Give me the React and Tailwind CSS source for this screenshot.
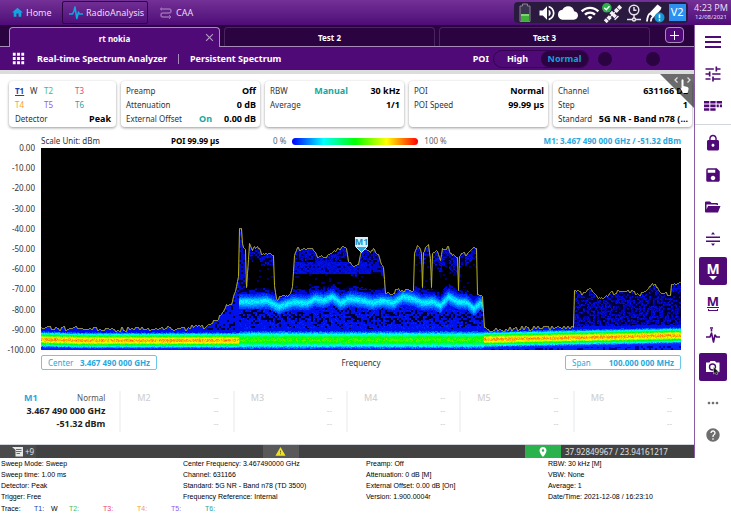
import { useMemo, useState } from "react";
import {
  MdApps,
  MdClose,
  MdCloud,
  MdHelp,
  MdHome,
  MdLock,
  MdMoreHoriz,
  MdPlace,
  MdSave,
  MdTune,
  MdVolumeUp,
  MdWarning,
  MdWifi,
} from "react-icons/md";

const PLOT_W = 640;
const PLOT_H = 202;

// [x, y] of the max hold trace, in plot units
const TRACE = [
  [0, 179], [20, 180], [60, 181], [100, 181], [145, 180], [152, 179], [157, 176], [163, 178],
  [169, 175], [175, 171], [180, 167], [185, 156], [190, 154], [194, 142], [197, 127],
  [198, 81], [200, 82], [201, 97], [204, 100], [205, 138], [207, 110], [208, 95], [211, 100],
  [216, 97], [220, 105], [224, 107], [229, 104], [232, 107], [233, 137], [235, 150],
  [242, 148], [249, 145], [251, 137], [253, 105], [256, 100], [264, 100], [272, 102],
  [276, 107], [282, 110], [287, 108], [292, 104], [299, 100], [302, 97], [305, 100],
  [307, 114], [312, 117], [317, 115], [319, 104], [325, 101], [332, 102], [337, 104],
  [340, 117], [342, 119], [344, 144], [352, 145], [357, 141], [372, 142], [373, 105],
  [376, 97], [379, 101], [380, 105], [381, 139], [382, 102], [387, 97], [389, 110],
  [390, 138], [391, 104], [396, 102], [399, 112], [401, 100], [407, 100], [411, 107],
  [416, 109], [417, 142], [418, 107], [426, 105], [432, 101], [435, 100], [436, 147],
  [441, 149], [443, 179], [447, 182], [455, 181], [492, 180], [532, 179], [533, 142],
  [539, 145], [549, 141], [554, 147], [561, 152], [569, 145], [581, 143], [591, 143],
  [601, 146], [604, 141], [609, 139], [614, 134], [616, 140], [619, 145], [629, 146],
  [630, 137], [634, 135], [640, 135],
];

// the bright band of the carrier's average level
const RIDGE = [
  [198, 153], [215, 153], [226, 152], [237, 158], [252, 153], [266, 154], [274, 150],
  [282, 152], [291, 148], [299, 154], [309, 150], [322, 152], [331, 154], [341, 152],
  [352, 154], [361, 148], [372, 150], [381, 154], [392, 153], [399, 157], [407, 148],
  [416, 153], [426, 154], [432, 160], [439, 154], [443, 158],
];

const STOPS = [
  [0, [0, 0, 0]],
  [0.1, [0, 0, 160]],
  [0.2, [0, 20, 255]],
  [0.4, [0, 255, 255]],
  [0.6, [0, 255, 0]],
  [0.8, [255, 255, 0]],
  [1, [255, 0, 0]],
];
const LEVELS = 28;

function interpolate(points, x) {
  for (let i = 1; i < points.length; i++) {
    if (x <= points[i][0]) {
      const [x0, y0] = points[i - 1];
      const [x1, y1] = points[i];
      return y0 + ((y1 - y0) * (x - x0)) / (x1 - x0);
    }
  }
  return points[points.length - 1][1];
}

function noise(x, y) {
  let h = (x * 374761393 + y * 668265263) | 0;
  h = Math.imul(h ^ (h >>> 13), 1274126177);
  return ((h ^ (h >>> 16)) >>> 0) / 4294967295;
}

function levelColor(v) {
  for (let i = 1; i < STOPS.length; i++) {
    if (v <= STOPS[i][0]) {
      const [v0, c0] = STOPS[i - 1];
      const [v1, c1] = STOPS[i];
      const t = (v - v0) / (v1 - v0);
      return `rgb(${c0.map((c, k) => Math.round(c + (c1[k] - c) * t)).join(",")})`;
    }
  }
  return "rgb(255,0,0)";
}

function density(x, y, top) {
  if (y < top) return 0;
  const n = noise(x, y);
  const grain = noise(x >> 1, (y >> 1) + 500);
  const inCarrier = x >= 198 && x < 443;

  // noise floor
  const center = x < 443 ? (x < 198 ? 191 + Math.min(1, x / 40) : 191.5) : 191 - ((x - 443) / 197) * 4;
  const d = y - center;
  const peak = inCarrier ? 0.64 : 0.87;
  const width = inCarrier ? 8.5 : 6.8;
  const floor = peak * Math.exp(-((d / width) ** 2)) + (n - 0.5) * 0.09;
  if (floor > 0.22) return floor;
  if (d > 0) return d > 10 && grain < 0.3 ? 0.12 : 0.2;
  if (d > -11) return 0.19;

  if (x < 198) return grain < 0.2 && x > 150 ? 0.05 : 0.17;
  if (x >= 532) return grain < 0.32 + (170 - y) * 0.006 ? 0.02 : 0.08 + n * 0.1;
  if (!inCarrier) return 0.15;

  const r = y - interpolate(RIDGE, x);
  if (r > -13) {
    const glow = 0.19 * Math.exp(-((r / (r < 0 ? 4.5 : 5.5)) ** 2));
    if (r < 0) {
      if (r > -8) return 0.19 + glow + (n - 0.5) * 0.04;
      return grain < (-r - 7) * 0.13 ? 0.05 : 0.15;
    }
    if (r < 8) return 0.2 + glow + (n - 0.5) * 0.04;
    const gap = 1 - Math.abs(y - 169) / 13;
    return grain < gap * 0.45 ? 0.03 : 0.17 + n * 0.03;
  }
  if (x < 207) return grain < 0.35 ? 0.03 : 0.13;
  const depth = y - top;
  if (x >= 253 && x < 330 && y > 113 && y < 126) return grain < 0.12 ? 0.08 : 0.14 + n * 0.04;
  if (x >= 330 && x < 343 && y > 113 && y < 126) return grain < 0.5 ? 0.02 : 0.13;
  const cap = x >= 391 && x < 417 ? 18 : 12;
  if (depth < cap) return grain < 0.12 + depth * 0.03 ? 0.04 : 0.1 + n * 0.08;
  return grain > 0.94 ? 0.08 : 0;
}

function buildSpectrum() {
  const tops = [];
  for (let x = 0; x < PLOT_W; x++) {
    const n = noise(x >> 1, 7);
    tops.push(Math.round(interpolate(TRACE, x) + (n - 0.5) * 4));
  }
  const layers = Array.from({ length: LEVELS + 1 }, () => "");
  for (let y = 70; y < PLOT_H; y++) {
    let start = 0;
    let last = 0;
    for (let x = 0; x <= PLOT_W; x++) {
      const v = x < PLOT_W ? Math.min(1, density(x, y, tops[x])) : -1;
      const level = v < 0 ? -1 : Math.round(v * LEVELS);
      if (level !== last) {
        if (last > 0) layers[last] += `M${start} ${y}h${x - start}v1h${start - x}z`;
        start = x;
        last = level;
      }
    }
  }
  const trace = "M" + tops.map((y, x) => `${x + 0.5} ${y + 0.5}`).join("L");
  return { layers, trace };
}

const SpectrumPlot = () => {
  const { layers, trace } = useMemo(buildSpectrum, []);
  return (
    <svg
      viewBox={`0 0 ${PLOT_W} ${PLOT_H}`}
      preserveAspectRatio="none"
      className="block h-[202px] w-full bg-black"
      role="img"
      aria-label="Persistent spectrum"
    >
      {layers.map((d, i) =>
        d ? <path key={i} d={d} fill={levelColor(i / LEVELS)} shapeRendering="crispEdges" /> : null
      )}
      <path d={trace} fill="none" stroke="#b9b31c" strokeWidth="1" />
      <rect x="314" y="89" width="13" height="9" fill="#d6f1fb" />
      <text x="320.5" y="97" textAnchor="middle" fontSize="9" fontWeight="700" fill="#1c8fc6">
        M1
      </text>
      <path d="M314.500 98.500h12l-6 6z" fill="#2aa9e0" stroke="#d6f1fb" strokeWidth="1" />
    </svg>
  );
};

const PulseIcon = ({ className }) => (
  <svg viewBox="0 0 14 14" className={className} fill="none" stroke="currentColor" strokeWidth="1.600">
    <path d="M0 8h3.500l1.500-3 1-4 1.800 11.500L9.500 6l1 2H14" strokeLinejoin="round" />
  </svg>
);

const RouteIcon = () => (
  <svg viewBox="0 0 12 12" className="size-3" fill="none" stroke="#9a6cb4" strokeWidth="1.500">
    <path d="M0 2h9a2 2 0 0 1 0 4H3a2 2 0 0 0 0 4h8" />
    <path d="M9 8l2 2-2 2M1.500.5v3" strokeWidth="1" />
  </svg>
);

const BatteryIcon = () => (
  <svg viewBox="0 0 14 20" className="h-5 w-[14px]">
    <path d="M4.500 1h5v2h2.500v15.500H2V3h2.500z" fill="#3c3350" stroke="#8b8496" strokeWidth="1" />
    <path d="M3 11h8v7H3z" fill="#3fae3a" />
    <path d="M3 11h8v2H3z" fill="#7ad46f" />
  </svg>
);

const SatelliteIcon = () => (
  <svg viewBox="0 0 20 20" className="size-5">
    <g transform="rotate(45 11 11)" fill="#f4f1f6">
      <path d="M8 9.500h7v3.500H8zM15.500 8.500h1.500v5.500h-1.500z" />
      <path d="M9 0h4v3.500H9zM9 4.200h4v3.500H9zM9 14.800h4v3.500H9zM9 19h4v3H9zM10.500 7h1v8h-1z" />
    </g>
    <circle cx="4.800" cy="4.800" r="4.800" fill="#2bb24c" />
    <path d="M2.300 4.800l2 2 3.200-3.500" fill="none" stroke="#fff" strokeWidth="1.400" />
  </svg>
);

const ClockIcon = () => (
  <svg viewBox="0 0 16 18" className="h-[18px] w-4" fill="none" stroke="#e6e1ea" strokeWidth="1.500">
    <circle cx="8" cy="6" r="4.800" />
    <path d="M8 3v3.300h2.500M8 11v3M1 15.500h5M10 15.500h5" />
    <circle cx="8" cy="15.500" r="1.500" />
  </svg>
);

const ProbeIcon = () => (
  <svg viewBox="0 0 20 20" className="size-5">
    <path d="M12.500 1.500l4 3-1 2.500L8.500 14.500 4 10.500z" fill="#fff" />
    <path d="M5 10.500C2.500 12 2.500 14 2 18.500M8 13.500c-1.500 1-2 2-2.200 5" stroke="#fff" strokeWidth="1.800" fill="none" />
    <circle cx="14.500" cy="14.500" r="5" fill="#1697d4" />
    <path d="M14.500 11.500v3.800M14.500 16.300v1.400" stroke="#fff" strokeWidth="1.500" />
  </svg>
);

const GridRowsIcon = () => (
  <svg viewBox="0 0 18 10" className="h-[10px] w-[18px]" fill="currentColor">
    <path d="M0 0h5.300v2.600H0zM6.300 0h5.300v2.600H6.300zM12.600 0H18v2.600h-5.400zM0 3.600h5.300v2.600H0zM6.300 3.600h5.300v2.600H6.300zM12.600 3.600h2.200v2.600h-2.200zM15.800 3.600H18v2.600h-2.200zM0 7.200h5.300v2.600H0zM6.300 7.200h5.300v2.600H6.300z" />
  </svg>
);

const FolderIcon = () => (
  <svg viewBox="0 0 16 12" className="h-3 w-4" fill="currentColor">
    <path d="M0 1.500Q0 .5 1 .5h4L6.500 2H12q1 0 1 1v1h-1.500v-.5H1.500v5L3 5h12.500L13 11.500H1q-1 0-1-1z" />
  </svg>
);

const SplitIcon = () => (
  <svg viewBox="0 0 14 14" className="size-[14px]" fill="currentColor">
    <path d="M0 4.500h14V6H0zM0 8.500h14V10H0zM7 0l2 2.500H5zM7 14l2-2.500H5z" />
  </svg>
);

const CameraIcon = () => (
  <svg viewBox="0 0 16 16" className="size-4">
    <path d="M1 3.500h3.500L5.500 2h4.500l1 1.500h3.500v9.500H1z" fill="#fff" />
    <circle cx="7.500" cy="8" r="3" fill="none" stroke="#4f0a78" strokeWidth="1.400" />
    <path d="M8.500 8v7l1.700-1.400 1.100 2.200 1.500-.7-1.100-2.200h2.200z" fill="#111" stroke="#ddd" strokeWidth="0.500" />
  </svg>
);

const RailPulseIcon = () => (
  <svg viewBox="0 0 16 16" className="size-4" fill="none" stroke="currentColor" strokeWidth="1.600">
    <path d="M1 10h4l1.500-4L8.500 15 10 8l1.500 2H15M6.500 2v2.500M5 1h3" strokeLinejoin="round" />
  </svg>
);

const NotesIcon = () => (
  <svg viewBox="0 0 12 10" className="h-[10px] w-3">
    <path d="M0 0h11v9.500H3.500V3z" fill="#e8e8e8" />
    <path d="M4 2.500h5.500M4 4.500h5.500M4.500 6.500H8" stroke="#4b4b4b" strokeWidth="0.800" />
  </svg>
);

const RailButton = ({ label, active, children }) => (
  <button
    type="button"
    aria-label={label}
    className={`flex size-7 shrink-0 flex-col items-center justify-center rounded-xs ${
      active ? "bg-[#4f0a78] text-white" : "text-[#4f0a78]"
    }`}
  >
    {children}
  </button>
);

const Rail = () => (
  <aside className="flex w-[37px] shrink-0 flex-col items-center gap-1 border-l border-[#8a5aa5] bg-white pt-[3px]">
    <RailButton label="Menu">
      <svg viewBox="0 0 16 12" className="h-3 w-4" fill="currentColor">
        <path d="M0 0h16v2H0zM0 5h16v2H0zM0 10h16v2H0z" />
      </svg>
    </RailButton>
    <RailButton label="Settings"><MdTune className="size-5" /></RailButton>
    <RailButton label="Layout"><GridRowsIcon /></RailButton>
    <div className="h-px w-full shrink-0 bg-gray-300" />
    <RailButton label="Lock"><MdLock className="size-[18px]" /></RailButton>
    <RailButton label="Save"><MdSave className="size-[18px]" /></RailButton>
    <RailButton label="Open"><FolderIcon /></RailButton>
    <RailButton label="Split"><SplitIcon /></RailButton>
    <RailButton label="Marker" active>
      <span className="text-[14px] leading-3 font-bold">M</span>
      <svg viewBox="0 0 8 4" className="mt-px h-1 w-2" fill="currentColor"><path d="M0 0h8L4 4z" /></svg>
    </RailButton>
    <RailButton label="Marker table">
      <span className="text-[13px] leading-[11px] font-bold">M</span>
      <svg viewBox="0 0 12 4" className="h-1 w-3" fill="currentColor">
        <path d="M0 0h12v1H0zM1 2h1v1h8V2h1v2H1z" />
      </svg>
    </RailButton>
    <RailButton label="Trace"><RailPulseIcon /></RailButton>
    <RailButton label="Screenshot" active><CameraIcon /></RailButton>
    <div className="flex flex-col gap-1 pt-1 [&_button]:text-[#6e6e6e]">
      <RailButton label="More"><MdMoreHoriz className="size-4" /></RailButton>
      <RailButton label="Help"><MdHelp className="size-4" /></RailButton>
    </div>
  </aside>
);

const TopBar = () => (
  <header className="flex h-[25px] items-stretch bg-linear-to-b from-[#733096] to-[#4f0a78] text-[9px] text-[#e9dcf0]">
    <nav className="flex">
      <a href="#home" className="flex w-[62px] items-center gap-[2px] pl-[11px]">
        <MdHome className="size-[13px] text-[#12a5e0]" />
        Home
      </a>
      <a href="#radio" className="my-px flex w-[86px] items-center gap-[3px] rounded-xs border border-[#2b0642] pl-[6px]">
        <PulseIcon className="size-[14px] text-[#12a5e0]" />
        RadioAnalysis
      </a>
      <a href="#caa" className="flex items-center gap-1 pl-3">
        <RouteIcon />
        CAA
      </a>
    </nav>
    <div className="my-[2px] mr-[3px] ml-auto grid w-[174px] grid-cols-8 place-items-center rounded-sm bg-[#2a1a40] text-white">
      <BatteryIcon />
      <MdVolumeUp className="size-5" />
      <MdCloud className="size-5" />
      <MdWifi className="size-5" />
      <SatelliteIcon />
      <ClockIcon />
      <ProbeIcon />
      <span className="flex h-[17px] w-[17px] items-center justify-center bg-[#2d8ff0] text-[11px] text-white">V2</span>
    </div>
    <div className="flex w-10 flex-col items-center justify-center">
      <span className="leading-[10px]">4:23 PM</span>
      <span className="text-[6px] leading-[9px]">12/08/2021</span>
    </div>
  </header>
);

const TABS = ["rt nokia", "Test 2", "Test 3"];

const TabBar = () => {
  const [current, setCurrent] = useState(0);
  return (
    <div className="flex h-[22px] gap-1 border-b border-[#a98bbb] bg-[#2b0340] pt-[2px] pl-[9px] text-[8px] font-bold text-white">
      {TABS.map((tab, i) => (
        <div
          key={tab}
          className={`flex flex-1 items-center rounded-t-sm border border-b-0 ${
            i === current ? "-mb-px border-[#a98bbb] bg-[#4f0a78]" : "border-[#4a2460]"
          }`}
        >
          <button type="button" className="h-full flex-1 pt-[2px]" onClick={() => setCurrent(i)}>{tab}</button>
          {i === current && (
            <button type="button" aria-label="Close tab" className="-ml-4 pr-[3px] text-[#b79cc7]">
              <MdClose className="size-[13px]" />
            </button>
          )}
        </div>
      ))}
      <div className="w-10 pl-[11px]">
        <button
          type="button"
          aria-label="Add tab"
          className="flex h-4 w-[19px] items-center justify-center rounded-sm border border-[#a98bbb] bg-[#4f0a78]"
        >
          <svg viewBox="0 0 9 9" className="size-[9px]" stroke="#fff" strokeWidth="1"><path d="M4.500 0v9M0 4.500h9" /></svg>
        </button>
      </div>
    </div>
  );
};

const ModeBar = () => (
  <div className="flex h-[23px] items-center bg-[#4f0a78] pl-[10px] text-[9px] font-bold text-white">
    <button type="button" aria-label="Applications"><MdApps className="size-[17px]" /></button>
    <h1 className="ml-[10px]">Real-time Spectrum Analyzer</h1>
    <span className="mx-[11px] h-[10px] w-px bg-[#a98bbb]" />
    <span>Persistent Spectrum</span>
    <span className="mr-1 ml-auto">POI</span>
    <div className="flex h-[18px] w-24 rounded-full border border-[#33054d]">
      <button type="button" className="flex-1">High</button>
      <button type="button" className="flex-1 rounded-full bg-[#2b0340] text-[#129fdc]">Normal</button>
    </div>
    <span className="ml-[9px] size-[14px] rounded-full bg-[#2b0340]" />
    <span className="mr-[34px] ml-[34px] size-[14px] rounded-full bg-[#2b0340]" />
  </div>
);

const Card = ({ className, children }) => (
  <section className={`h-[46px] rounded-sm bg-white pt-[3px] shadow-[0_1px_3px_rgba(0,0,0,0.4)] ${className}`}>
    {children}
  </section>
);

const Param = ({ label, extra, value }) => (
  <div className="flex h-[14px] items-center whitespace-nowrap">
    <span className="mr-auto text-[8px]">{label}</span>
    {extra && <span className="mr-3 ml-1 text-[9px] font-bold text-[#16a8a0]">{extra}</span>}
    <span className="text-[9px] font-bold text-black">{value}</span>
  </div>
);

const SettingsCards = () => (
  <div className="relative flex gap-[5px] pt-[7px] pr-[2px] pl-[9px] text-[#333]">
    <Card className="w-[107px] pr-[5px] pl-[6px]">
      <div className="grid h-7 grid-cols-[15px_14px_31px_1fr] items-center justify-items-start text-[8px]">
        <button type="button" className="font-bold text-[#1f3fae] underline">T1</button>
        <span>W</span>
        <button type="button" className="text-[#4cbb5c]">T2</button>
        <button type="button" className="text-[#f0417c]">T3</button>
        <button type="button" className="text-[#f5a12c]">T4</button>
        <span />
        <button type="button" className="text-[#8a5cf0]">T5</button>
        <button type="button" className="text-[#25a5ac]">T6</button>
      </div>
      <Param label="Detector" value="Peak" />
    </Card>
    <Card className="flex-1 pr-1 pl-[5px]">
      <Param label="Preamp" value="Off" />
      <Param label="Attenuation" value="0 dB" />
      <Param label="External Offset" extra="On" value="0.00 dB" />
    </Card>
    <Card className="flex-1 pr-1 pl-[5px]">
      <div className="flex h-[14px] items-center justify-between">
        <span className="text-[8px]">RBW</span>
        <span className="pl-1 text-[9px] font-bold text-[#16a8a0]">Manual</span>
        <span className="text-[9px] font-bold text-black">30 kHz</span>
      </div>
      <Param label="Average" value="1/1" />
    </Card>
    <Card className="flex-1 pr-1 pl-[5px]">
      <Param label="POI" value="Normal" />
      <Param label="POI Speed" value="99.99 µs" />
    </Card>
    <Card className="flex-1 pr-1 pl-[5px]">
      <Param label="Channel" value="631166 DL" />
      <Param label="Step" value="1" />
      <Param label="Standard" value="5G NR - Band n78 (..." />
    </Card>
    <svg viewBox="0 0 34 34" className="absolute top-0 right-0 size-[34px]">
      <path d="M0 0h34v34z" fill="#000" fillOpacity="0.580" />
      <path d="M17.500 3.500L15 6l2.500 2.500M27.500 3.500L30 6l-2.500 2.500" fill="none" stroke="#ddd" strokeWidth="1.300" />
      <path d="M21.500 6q1-1.500 2 0v6l4 1q1.500.5 1 2.500l-1 3.500h-4.500l-2.500-4.500q0-1.500 1 0z" fill="#fff" />
    </svg>
  </div>
);

const SCALE = [0, -10, -20, -30, -40, -50, -60, -70, -80, -90, -100];

const PlotArea = () => (
  <div className="pr-[13px] text-[8px] text-[#333]">
    <div className="flex h-[21px] items-center pt-[7px] pl-[41px] leading-[14px] whitespace-nowrap">
      <span className="w-[130px]">Scale Unit: dBm</span>
      <span className="w-[102px] font-bold text-black">POI 99.99 µs</span>
      <span className="mr-[6px] text-[#666]">0 %</span>
      <span className="h-[7px] w-[126px] rounded-full bg-[linear-gradient(to_right,#0000ff,#00ffff_25%,#00ff00_50%,#ffff00_75%,#ff0000)]" />
      <span className="ml-[6px] text-[#666]">100 %</span>
      <span className="ml-auto font-bold text-[#29a8dc]">M1: 3.467 490 000 GHz / -51.32 dBm</span>
    </div>
    <div className="flex">
      <div className="-my-[5px] flex w-[41px] shrink-0 flex-col justify-between pr-[6px] text-right leading-[10px]">
        {SCALE.map((db) => (
          <span key={db}>{db.toFixed(2)}</span>
        ))}
      </div>
      <div className="min-w-0 flex-1">
        <SpectrumPlot />
      </div>
    </div>
    <div className="flex items-center justify-between pt-[5px] pl-[41px]">
      <button type="button" className="flex h-[15px] w-[116px] items-center justify-between rounded-xs border border-[#6cc8ea] px-[6px] text-[#29a8dc]">
        Center <b>3.467 490 000 GHz</b>
      </button>
      <span>Frequency</span>
      <button type="button" className="flex h-[15px] w-[116px] items-center justify-between rounded-xs border border-[#6cc8ea] px-[6px] text-[#29a8dc]">
        Span <b>100.000 000 MHz</b>
      </button>
    </div>
  </div>
);

const Markers = () => (
  <div className="mt-[21px] mb-3 flex h-[41px] px-2 text-right">
    <div className="flex-1 border-r-2 border-gray-100 pr-[14px] pl-4">
      <div className="flex items-center justify-between leading-[13px]">
        <b className="text-[9px] text-[#29a8dc]">M1</b>
        <span className="text-[8px] text-[#555]">Normal</span>
      </div>
      <div className="text-[9px] leading-[14px] font-bold whitespace-nowrap">3.467 490 000 GHz</div>
      <div className="text-[9px] leading-[11px] font-bold">-51.32 dBm</div>
    </div>
    {["M2", "M3", "M4", "M5", "M6"].map((name) => (
      <div key={name} className="flex-1 border-r-2 border-gray-100 pr-[14px] pl-4 text-[8px] text-[#d0d0d0] last:border-r-0">
        <div className="flex items-center justify-between leading-[13px]">
          <span className="text-[9px] font-medium">{name}</span>
          <span>--</span>
        </div>
        <div className="leading-[14px]">--</div>
        <div className="leading-[11px]">--</div>
      </div>
    ))}
  </div>
);

const StatusBar = () => (
  <div className="flex h-[14px] items-stretch border-t border-gray-300 bg-[#424242] text-[8px] text-[#e0e0e0]">
    <button type="button" className="flex w-9 items-center gap-[1px] bg-[#4b4b4b] pl-3">
      <NotesIcon />
      +9
    </button>
    <div className="flex flex-1 justify-center">
      <button type="button" aria-label="Warnings" className="flex w-9 items-center justify-center bg-[#595959]">
        <MdWarning className="size-[11px] text-[#f2e21c]" />
      </button>
    </div>
    <button type="button" aria-label="Location" className="flex w-9 items-center justify-center bg-[#2bb24c] text-white">
      <MdPlace className="size-3" />
    </button>
    <span className="flex w-[133px] items-center pl-1">37.92849967 / 23.94161217</span>
  </div>
);

const Footer = () => (
  <footer className="pl-px font-['Liberation_Sans',Arial,sans-serif] text-[7px] text-black">
    <div className="grid grid-cols-[182px_183px_182px_1fr] leading-[11px]">
      <div>
        <p>Sweep Mode: Sweep</p>
        <p>Sweep time: 1.00 ms</p>
        <p>Detector: Peak</p>
        <p>Trigger: Free</p>
      </div>
      <div>
        <p>Center Frequency: 3.467490000 GHz</p>
        <p>Channel: 631166</p>
        <p>Standard: 5G NR - Band n78 (TD 3500)</p>
        <p>Frequency Reference: Internal</p>
      </div>
      <div>
        <p>Preamp: Off</p>
        <p>Attenuation: 0 dB [M]</p>
        <p>External Offset: 0.00 dB [On]</p>
        <p>Version: 1.900.0004r</p>
      </div>
      <div>
        <p>RBW: 30 kHz [M]</p>
        <p>VBW: None</p>
        <p>Average: 1</p>
        <p>Date/Time: 2021-12-08 / 16:23:10</p>
      </div>
    </div>
    <div className="grid grid-cols-[33px_17px_18px_34px_34px_34px_34px_1fr] leading-[13px]">
      <span>Trace:</span>
      <span className="text-[#1f3fae]">T1:</span>
      <span>W</span>
      <span className="text-[#4cbb5c]">T2:</span>
      <span className="text-[#f0417c]">T3:</span>
      <span className="text-[#f5a12c]">T4:</span>
      <span className="text-[#8a5cf0]">T5:</span>
      <span className="text-[#25a5ac]">T6:</span>
    </div>
  </footer>
);

export default function App() {
  return (
    <div className="bg-white font-['Noto_Sans',sans-serif] text-[#222]">
      <TopBar />
      <div className="flex">
        <main className="min-w-0 flex-1">
          <TabBar />
          <ModeBar />
          <div className="border-t-4 border-[#dcdcdc]">
            <SettingsCards />
            <PlotArea />
            <Markers />
          </div>
          <StatusBar />
        </main>
        <Rail />
      </div>
      <Footer />
    </div>
  );
}
